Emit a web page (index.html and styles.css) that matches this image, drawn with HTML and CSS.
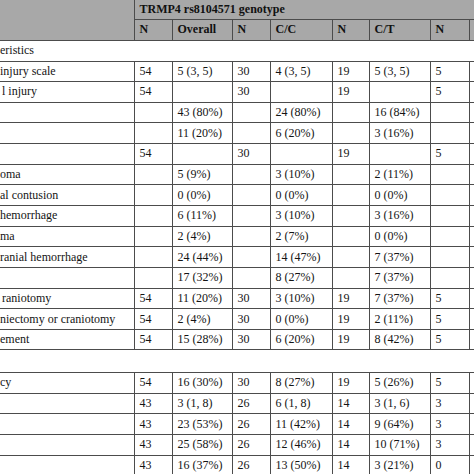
FILE: index.html
```html
<!DOCTYPE html>
<html lang="en">
<head>
<meta charset="utf-8">
<title>TRMP4 rs8104571 genotype table</title>
<link rel="stylesheet" href="styles.css">
</head>
<body>
<div class="frame">
<table class="t">
<colgroup>
<col class="c-lab"><col class="c-n1"><col class="c-v1"><col class="c-n2"><col class="c-v2"><col class="c-n3"><col class="c-v3"><col class="c-n4"><col class="c-v4">
</colgroup>
<thead>
<tr class="h1"><th class="corner" rowspan="2"></th><th class="group" colspan="8">TRMP4 rs8104571 genotype</th></tr>
<tr class="h2"><th>N</th><th>Overall</th><th>N</th><th>C/C</th><th>N</th><th>C/T</th><th>N</th><th></th></tr>
</thead>
<tbody>
<tr class="sec"><td colspan="9">eristics</td></tr>
<tr><td class="lab">injury scale</td><td>54</td><td>5 (3, 5)</td><td>30</td><td>4 (3, 5)</td><td>19</td><td>5 (3, 5)</td><td>5</td><td></td></tr>
<tr><td class="lab"><span class="in2">l injury</span></td><td>54</td><td></td><td>30</td><td></td><td>19</td><td></td><td>5</td><td></td></tr>
<tr><td class="lab"></td><td></td><td>43 (80%)</td><td></td><td>24 (80%)</td><td></td><td>16 (84%)</td><td></td><td></td></tr>
<tr><td class="lab"></td><td></td><td>11 (20%)</td><td></td><td>6 (20%)</td><td></td><td>3 (16%)</td><td></td><td></td></tr>
<tr><td class="lab"></td><td>54</td><td></td><td>30</td><td></td><td>19</td><td></td><td>5</td><td></td></tr>
<tr><td class="lab">oma</td><td></td><td>5 (9%)</td><td></td><td>3 (10%)</td><td></td><td>2 (11%)</td><td></td><td></td></tr>
<tr><td class="lab">al contusion</td><td></td><td>0 (0%)</td><td></td><td>0 (0%)</td><td></td><td>0 (0%)</td><td></td><td></td></tr>
<tr><td class="lab">hemorrhage</td><td></td><td>6 (11%)</td><td></td><td>3 (10%)</td><td></td><td>3 (16%)</td><td></td><td></td></tr>
<tr><td class="lab">ma</td><td></td><td>2 (4%)</td><td></td><td>2 (7%)</td><td></td><td>0 (0%)</td><td></td><td></td></tr>
<tr><td class="lab">ranial hemorrhage</td><td></td><td>24 (44%)</td><td></td><td>14 (47%)</td><td></td><td>7 (37%)</td><td></td><td></td></tr>
<tr><td class="lab"></td><td></td><td>17 (32%)</td><td></td><td>8 (27%)</td><td></td><td>7 (37%)</td><td></td><td></td></tr>
<tr><td class="lab"><span class="in2">raniotomy</span></td><td>54</td><td>11 (20%)</td><td>30</td><td>3 (10%)</td><td>19</td><td>7 (37%)</td><td>5</td><td></td></tr>
<tr><td class="lab">niectomy or craniotomy</td><td>54</td><td>2 (4%)</td><td>30</td><td>0 (0%)</td><td>19</td><td>2 (11%)</td><td>5</td><td></td></tr>
<tr><td class="lab">ement</td><td>54</td><td>15 (28%)</td><td>30</td><td>6 (20%)</td><td>19</td><td>8 (42%)</td><td>5</td><td></td></tr>
<tr class="gap"><td colspan="9"></td></tr>
<tr><td class="lab">cy</td><td>54</td><td>16 (30%)</td><td>30</td><td>8 (27%)</td><td>19</td><td>5 (26%)</td><td>5</td><td></td></tr>
<tr><td class="lab"></td><td>43</td><td>3 (1, 8)</td><td>26</td><td>6 (1, 8)</td><td>14</td><td>3 (1, 6)</td><td>3</td><td></td></tr>
<tr><td class="lab"></td><td>43</td><td>23 (53%)</td><td>26</td><td>11 (42%)</td><td>14</td><td>9 (64%)</td><td>3</td><td></td></tr>
<tr><td class="lab"></td><td>43</td><td>25 (58%)</td><td>26</td><td>12 (46%)</td><td>14</td><td>10 (71%)</td><td>3</td><td></td></tr>
<tr><td class="lab"></td><td>43</td><td>16 (37%)</td><td>26</td><td>13 (50%)</td><td>14</td><td>3 (21%)</td><td>0</td><td></td></tr>
</tbody>
</table>
</div>
</body>
</html>
```
FILE: styles.css
```css
html, body {
  margin: 0;
  padding: 0;
  background: #ffffff;
}

.frame {
  width: 474px;
  height: 474px;
  overflow: hidden;
}

.t {
  border-collapse: collapse;
  table-layout: fixed;
  width: 529px;
  font-family: "Liberation Serif", "Times New Roman", serif;
  font-size: 12px;
  color: #141414;
}

.c-lab { width: 134px; }
.c-n1 { width: 38px; }
.c-v1 { width: 60px; }
.c-n2 { width: 38px; }
.c-v2 { width: 62px; }
.c-n3 { width: 37px; }
.c-v3 { width: 61px; }
.c-n4 { width: 39px; }
.c-v4 { width: 60px; }

th, td {
  padding: 0 0 0 5px;
  border: 1px solid #4c4c4c;
  text-align: left;
  vertical-align: middle;
  white-space: nowrap;
  overflow: hidden;
}

th {
  background: #a8a8a8;
  font-weight: bold;
  color: #111111;
}

.corner {
  border-top: none;
  border-left: none;
}

.group {
  border-top: none;
}

.h1 { height: 19px; }
.h2 { height: 21px; }

tbody tr { height: 20.65px; }

.sec { height: 21px; }
.sec td {
  border-left: none;
  border-right: none;
  padding-left: 0;
}

.gap { height: 22.5px; }
.gap td {
  border-left: none;
  border-right: none;
}

td.lab {
  border-left: none;
  padding-left: 0;
}

.in2 { margin-left: 2px; }
```
